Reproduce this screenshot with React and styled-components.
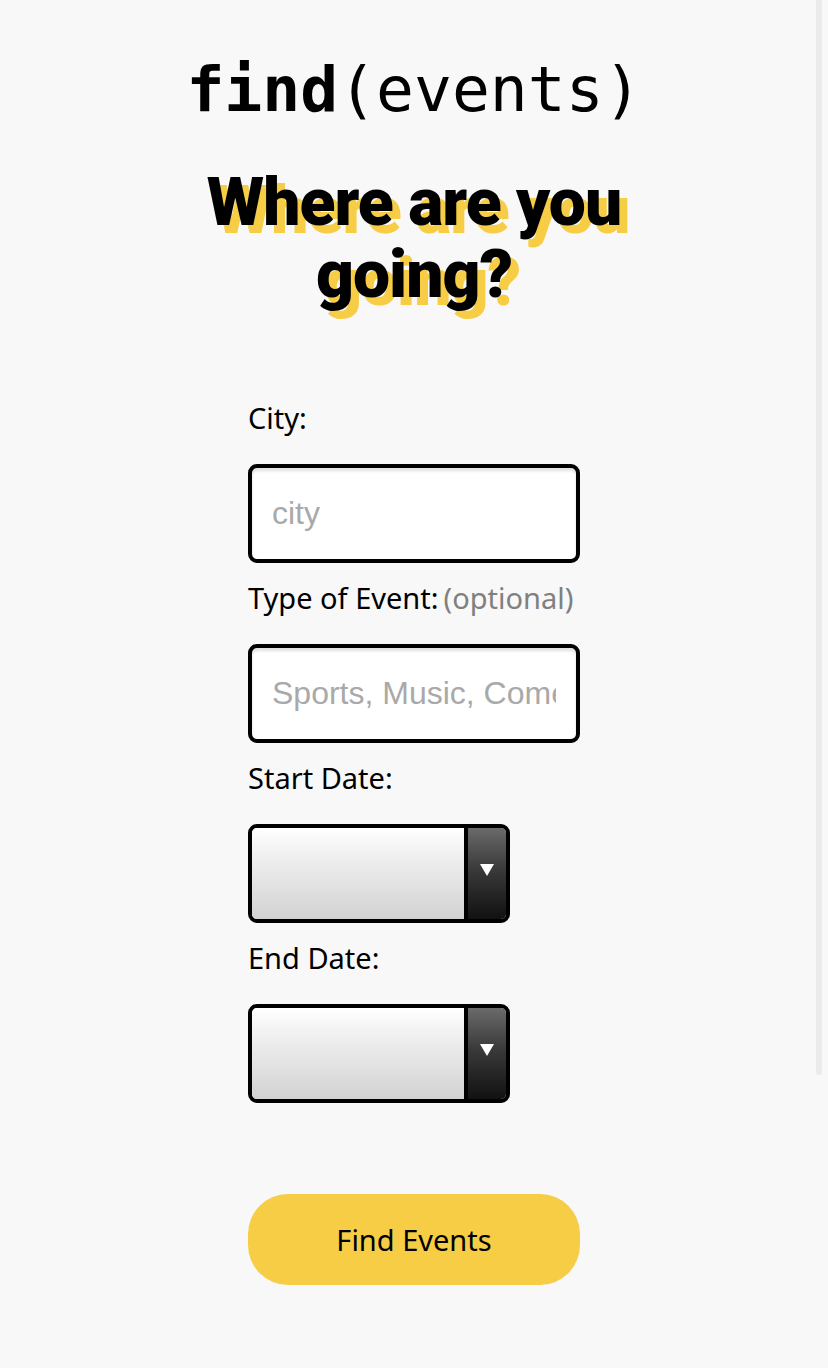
import React from "react";
import styled, { createGlobalStyle } from "styled-components";

const Global = createGlobalStyle`
  html, body { margin: 0; padding: 0; background: #f8f8f8; }
  * { box-sizing: border-box; }
`;

const Page = styled.main`
  min-height: 1368px;
  background: #f8f8f8;
  display: flex;
  flex-direction: column;
  align-items: center;
  padding-top: 54px;
  position: relative;
`;

const Title = styled.h1`
  margin: 0;
  font-family: "DejaVu Sans Mono", "Liberation Mono", monospace;
  font-size: 63px;
  font-weight: 400;
  line-height: 72px;
  color: #000;
`;

const Bold = styled.span`
  font-weight: 700;
`;

const Heading = styled.h2`
  margin: 41px 0 0;
  width: 480px;
  text-align: center;
  font-family: Roboto, "Liberation Sans", sans-serif;
  font-weight: 900;
  font-size: 66px;
  line-height: 72px;
  letter-spacing: -1px;
  color: #000;
  text-shadow: 8px 8px 0 #f7cd45;
`;

const Form = styled.form`
  width: 332px;
  margin-top: 89px;
  display: flex;
  flex-direction: column;
`;

const Label = styled.label`
  display: block;
  margin-top: ${(p) => (p.$first ? "0" : "17px")};
  margin-bottom: 28px;
  height: 36px;
  line-height: 36px;
  font-family: "Noto Sans", Lato, sans-serif;
  font-size: 29px;
  color: #000;
  white-space: nowrap;
`;

const Optional = styled.span`
  color: #808080;
  margin-left: 5px;
`;

const TextInput = styled.input`
  width: 332px;
  height: 99px;
  border: 4px solid #000;
  border-radius: 9px;
  background: #fff;
  box-shadow: inset 0 3px 3px rgba(0, 0, 0, 0.12);
  padding: 0 20px;
  font-family: "Liberation Sans", Arial, sans-serif;
  font-size: 32px;
  color: #000;
  outline: none;
  &::placeholder {
    color: #a9a9a9;
  }
`;

const DateSelect = styled.div`
  width: 262px;
  height: 99px;
  border: 4px solid #000;
  border-radius: 9px;
  overflow: hidden;
  display: flex;
`;

const DateField = styled.div`
  flex: 1;
  background: linear-gradient(to bottom, #ffffff 0%, #f0f0f0 30%, #d2d2d2 100%);
`;

const DateArrow = styled.div`
  width: 42px;
  border-left: 4px solid #000;
  background: linear-gradient(to bottom, #6a6a6a 0%, #3a3a3a 45%, #111 100%);
  display: flex;
  justify-content: center;
  padding-top: 36px;
`;

const Triangle = styled.span`
  width: 0;
  height: 0;
  border-left: 7px solid transparent;
  border-right: 7px solid transparent;
  border-top: 12px solid #fff;
`;

const Submit = styled.button`
  margin-top: 91px;
  width: 332px;
  height: 91px;
  border: none;
  border-radius: 40px;
  background: #f7cd45;
  font-family: "Noto Sans", Lato, sans-serif;
  font-size: 29px;
  color: #000;
  cursor: pointer;
`;

const Scrollbar = styled.div`
  position: absolute;
  top: 0;
  right: 6px;
  width: 6px;
  height: 1075px;
  background: #ebebeb;
  border-radius: 0 0 3px 3px;
`;

function DatePicker() {
  return (
    <DateSelect>
      <DateField />
      <DateArrow>
        <Triangle />
      </DateArrow>
    </DateSelect>
  );
}

export default function App() {
  return (
    <>
      <Global />
      <Page>
        <Title>
          <Bold>find</Bold>(events)
        </Title>
        <Heading>Where are you going?</Heading>
        <Form onSubmit={(e) => e.preventDefault()}>
          <Label $first>City:</Label>
          <TextInput placeholder="city" />
          <Label>
            Type of Event:<Optional>(optional)</Optional>
          </Label>
          <TextInput placeholder="Sports, Music, Comedy" />
          <Label>Start Date:</Label>
          <DatePicker />
          <Label>End Date:</Label>
          <DatePicker />
          <Submit type="submit">Find Events</Submit>
        </Form>
        <Scrollbar />
      </Page>
    </>
  );
}
